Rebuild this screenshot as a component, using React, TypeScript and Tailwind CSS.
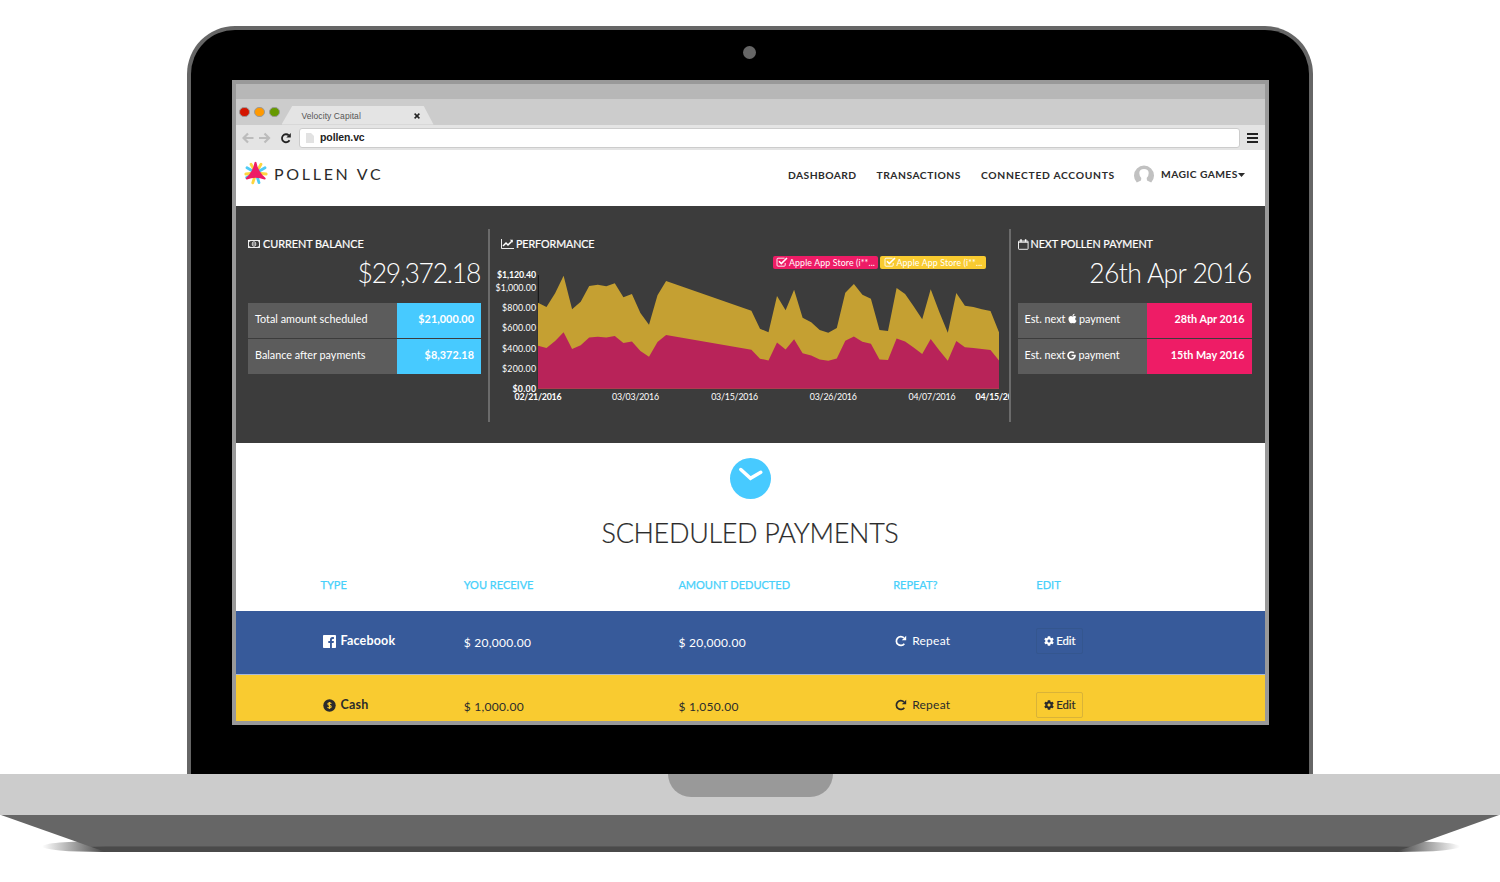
import { ReactNode } from "react";
import { FaApple, FaCog, FaGoogle } from "react-icons/fa";

// revenue per day, counted from 02/21/2016 as [day, svg height of the stacked total]
const totals: [number, number][] = [
  [0, 302.7], [1, 307], [2, 293.3], [3, 275.7], [4, 309.3], [5, 301.7], [6, 286], [7, 284.7],
  [8, 286.3], [9, 283.3], [10, 297.3], [11, 294], [12, 313], [13, 324.7], [14, 295.3], [15, 281],
  [25, 310.7], [26, 328.7], [27, 332.3], [28, 296], [29, 310.3], [30, 289.7], [31, 317.7],
  [32, 322.3], [33, 330], [34, 332.7], [35, 328], [36, 292.7], [37, 284], [38, 294.7],
  [39, 298.7], [40, 330], [41, 331], [42, 288], [43, 294], [44, 306.3], [45, 319.3],
  [46, 289.3], [47, 311.7], [48, 332.7], [49, 293], [50, 305.7], [51, 307], [52, 309.3],
  [53, 311], [54, 332.3],
];

const BASE = 388.7;
const LEFT = 538;
const RIGHT = 999;

const area = (share: number) => {
  const points = totals.map(([day, y]) => {
    const x = LEFT + (day * (RIGHT - LEFT)) / 54;
    return `${x.toFixed(1)},${(BASE - (BASE - y) * share).toFixed(1)}`;
  });
  return `${LEFT},${BASE} ${points.join(" ")} ${RIGHT},${BASE}`;
};

const yLabels: [string, number, number, boolean][] = [
  ["$1,120.40", 278.4, 39, true],
  ["$1,000.00", 290.6, 40.5, false],
  ["$800.00", 310.8, 34, false],
  ["$600.00", 331.2, 34, false],
  ["$400.00", 351.6, 34, false],
  ["$200.00", 371.6, 34, false],
  ["$0.00", 391.7, 23.5, true],
];

const xLabels: [string, number, boolean][] = [
  ["02/21/2016", 514.5, true],
  ["03/03/2016", 612, false],
  ["03/15/2016", 711.2, false],
  ["03/26/2016", 809.8, false],
  ["04/07/2016", 908.5, false],
  ["04/15/2016", 975.5, true],
];

const Chart = () => (
  <svg className="block" width="520" height="152" viewBox="490 270 520 152">
    <path d="M538.3 275v114" stroke="#111" strokeWidth="1" />
    <polygon points={area(1)} fill="#c5a032" />
    <polygon points={area(0.5)} fill="#b82359" />
    {yLabels.map(([label, y, width, bold]) => (
      <text
        key={label}
        x={536 - width}
        y={y}
        textLength={width}
        fontSize="8.8"
        fontWeight={bold ? 700 : 400}
        fill="#fff"
      >
        {label}
      </text>
    ))}
    {xLabels.map(([label, x, bold]) => (
      <text
        key={label}
        x={x}
        y="399.6"
        textLength="47"
        fontSize="8.8"
        fontWeight={bold ? 700 : 400}
        fill="#fff"
      >
        {label}
      </text>
    ))}
  </svg>
);

const Logo = () => (
  <svg width="24" height="24" viewBox="0 0 24 24">
    <g strokeWidth="2.8" strokeLinecap="round">
      <path d="M12 12 7 3.2M12 12l5-8.8M12 12 1.8 13M12 12l10.2 1M12 12 8.8 21.8" stroke="#fdd53f" />
      <path d="M12 12 3 6.8M12 12l9-5.2M12 12l3 9.6M12 12 2.6 16.4" stroke="#4fcbf5" />
    </g>
    <path
      d="M10.6 1.2q.9-.9 1.8 0Q14 10.5 21.5 17q.7 1.5-1 1.6Q11.500 14.800 3 18.600q-1.700-.1-1-1.600Q9 10.500 10.600 1.200Z"
      fill="#ee1c66"
    />
  </svg>
);

const MoneyIcon = () => (
  <svg width="12" height="8" viewBox="0 0 12 8" fill="none" stroke="#fff">
    <rect x=".5" y=".5" width="11" height="7" strokeWidth=".9" />
    <ellipse cx="6" cy="4" rx="1.8" ry="2.3" strokeWidth=".8" />
    <path d="M6 2.8v2.4M1 2.2 2.2 1M11 2.2 9.8 1M1 5.8 2.2 7M11 5.8 9.8 7" strokeWidth=".8" />
  </svg>
);

const TrendIcon = () => (
  <svg width="13" height="10" viewBox="0 0 13 10" fill="none" stroke="#fff">
    <path d="M.5 0v9.5H13" strokeWidth=".9" />
    <path d="m2 7 3-3 2 2 3.800-3.800" strokeWidth="1.5" />
    <path d="M8.800.8h3v3z" fill="#fff" stroke="none" />
  </svg>
);

const CalendarIcon = () => (
  <svg width="11" height="11" viewBox="0 0 11 11" fill="none" stroke="#fff">
    <rect x=".5" y="2" width="9.6" height="8.3" rx=".6" strokeWidth=".9" />
    <path d="M.5 3.2h9.6" strokeWidth="1" />
    <path d="M3 .2v2.600M7.600.2v2.600" strokeWidth="1.5" />
  </svg>
);

const CheckIcon = () => (
  <svg width="12" height="10" viewBox="0 0 12 10" fill="none" stroke="#fff">
    <path d="M8.600 1.200H2Q1 1.200 1 2.200v6q0 1 1 1h6.200q1 0 1-1V6" strokeWidth=".9" />
    <path d="m3 4.300 2.300 2.300L11 1" strokeWidth="1.6" />
  </svg>
);

const RepeatIcon = () => (
  <svg width="12" height="12" viewBox="0 0 12 12" fill="none">
    <path d="M9.300 8.700A4.400 4.400 0 1 1 8.900 2.900" stroke="currentColor" strokeWidth="1.7" />
    <path d="M11.200.8v4.400H6.800z" fill="currentColor" />
  </svg>
);

const FacebookIcon = () => (
  <svg width="13" height="13" viewBox="0 0 13 13">
    <rect width="13" height="13" rx=".8" fill="#fff" />
    <path d="M8.900 13V8h1.700l.3-2H8.900V4.800q0-.9 1-.9h1V2.100q-3.900-.7-3.900 2.400V6H5.300v2H7v5z" fill="#375a9a" />
  </svg>
);

const CashIcon = () => (
  <svg width="13" height="13" viewBox="0 0 13 13">
    <circle cx="6.5" cy="6.5" r="6.2" fill="#2b2b2b" />
    <path
      d="M8.300 4.800q-.5-.9-1.800-.9-1.600 0-1.600 1.200 0 1 1.600 1.300 1.700.3 1.700 1.400 0 1.200-1.700 1.200-1.500 0-1.900-1M6.500 3v7"
      fill="none"
      stroke="#f9cb30"
      strokeWidth="1.1"
    />
  </svg>
);

const BrowserBar = () => (
  <>
    <div className="h-[15px] shrink-0 bg-[#b7b7b7]" />
    <div className="flex h-[25.5px] shrink-0 items-end bg-[#ccc]">
      <div className="flex gap-[4.5px] pb-[7.5px] pl-[3.5px]">
        <i className="size-[10.5px] rounded-full border border-[#999] bg-[#d41500]" />
        <i className="size-[10.5px] rounded-full border border-[#999] bg-[#f90]" />
        <i className="size-[10.5px] rounded-full border border-[#999] bg-[#690]" />
      </div>
      <div className="ml-[2px] flex h-[19px] w-[152px] items-center bg-[#e4e4e4] pl-[20px] [clip-path:polygon(11px_0,142px_0,152px_100%,0_100%)]">
        <span className="w-[112px] pt-[2px] font-['Liberation_Sans'] text-[8.5px] tracking-[0.08px] text-[#555]">
          Velocity Capital
        </span>
        <svg width="6" height="6" viewBox="0 0 6 6" className="mt-[2px]">
          <path d="m.6.6 4.800 4.800M5.400.6.6 5.400" stroke="#222" strokeWidth="1.5" />
        </svg>
      </div>
    </div>
    <div className="flex h-[25.5px] shrink-0 items-center bg-[#e4e4e4] pl-[6px] pt-px">
      <svg width="29" height="12" viewBox="0 0 29 12" fill="none" stroke="#bcbcbc" strokeWidth="2.2" className="shrink-0">
        <path d="M6 1.500 1.500 6 6 10.500M1.500 6H11.500M22.500 1.500 27 6l-4.500 4.500M27 6H17" />
      </svg>
      <svg width="12" height="12" viewBox="0 0 12 12" fill="none" className="ml-[9px] mt-px shrink-0 text-[#222]">
        <path d="M9.500 8.200A4 4 0 1 1 8.800 3.400" stroke="currentColor" strokeWidth="1.8" />
        <path d="M10.800 1v4.500H6.300z" fill="currentColor" />
      </svg>
      <div className="ml-[7.5px] flex h-[20px] w-[941px] shrink-0 items-center rounded-[3px] border border-[#ccc] bg-white pl-[6px]">
        <svg width="8" height="10" viewBox="0 0 8 10">
          <path d="M0 0h5l3 3v7H0z" fill="#e2e2e2" />
        </svg>
        <span className="ml-[6px] font-['Liberation_Sans'] text-[10.5px] font-bold tracking-[-0.1px] text-[#222]">
          pollen.vc
        </span>
      </div>
      <svg width="11" height="10" viewBox="0 0 11 10" className="ml-[6.5px]">
        <path d="M0 1h11M0 5h11M0 9h11" stroke="#222" strokeWidth="1.9" />
      </svg>
    </div>
  </>
);

const Header = () => (
  <header className="flex h-[55.5px] shrink-0 items-start bg-white pl-[8.5px] text-[#2b2b2b]">
    <div className="flex pt-[11px]">
      <Logo />
      <span className="ml-[6px] w-[120px] text-[16px] leading-[25px] tracking-[2.7px]">
        POLLEN VC
      </span>
    </div>
    <nav className="ml-auto flex whitespace-nowrap pr-[20px] pt-[15.5px] text-[10.3px] font-bold leading-[19px]">
      <span className="w-[88.5px] pl-[0.5px] tracking-[0.42px]">DASHBOARD</span>
      <span className="w-[104.5px] pl-[0.5px] tracking-[0.51px]">TRANSACTIONS</span>
      <span className="w-[153px] pl-[0.5px] tracking-[0.69px]">CONNECTED ACCOUNTS</span>
      <svg width="20" height="20" viewBox="0 0 20 20" className="-mt-px">
        <path
          d="M2.800 17.500A10 10 0 1 1 17.200 17.500L13 15.500 12.700 13Q14.700 11 14.700 8 14.500 4 10 4T5.300 8Q5.300 11 7.300 13L7 15.500Z"
          fill="#c1c1c1"
        />
      </svg>
      <span className="-mt-px ml-[7px] w-[77px] pl-[0.5px] tracking-[0.4px]">MAGIC GAMES</span>
      <svg width="7" height="4" viewBox="0 0 7 4" className="mt-[7px]">
        <path d="M0 0h7L3.500 4z" fill="#2b2b2b" />
      </svg>
    </nav>
  </header>
);

type StatRow = { label: ReactNode; value: string };

const StatTable = ({ rows, pink }: { rows: StatRow[]; pink?: boolean }) => (
  <div className="flex flex-col gap-[1.5px]">
    {rows.map((row) => (
      <div key={row.value} className="flex h-[35px] bg-[#5c5c5c] text-[10.8px] leading-[32px]">
        <div className="flex h-[32px] flex-1 items-center whitespace-nowrap pl-[7px]">{row.label}</div>
        <div
          className={
            pink
              ? "w-[104.5px] bg-[#ee1c66] pr-[7px] text-right font-bold"
              : "w-[84.5px] bg-[#47caff] pr-[7px] text-right font-bold tracking-[0.05px]"
          }
        >
          {row.value}
        </div>
      </div>
    ))}
  </div>
);

const Stats = () => (
  <section className="flex h-[237.5px] shrink-0 bg-[#3c3c3c] pt-[23px] text-white">
    <div className="h-[193px] w-[254.5px] border-r-2 border-[#6b6b6b] pl-[12.5px] pr-[7px]">
      <h2 className="flex h-[30px] items-center gap-[3px] pt-px text-[10.9px] tracking-[-0.06px] [-webkit-text-stroke:0.2px]">
        <MoneyIcon />
        CURRENT BALANCE
      </h2>
      <p className="h-[44px] text-right text-[26.5px] font-light leading-[28px] tracking-[-1.25px]">
        <span className="mr-[1px]">$29,372.18</span>
      </p>
      <StatTable
        rows={[
          { label: "Total amount scheduled", value: "$21,000.00" },
          { label: "Balance after payments", value: "$8,372.18" },
        ]}
      />
    </div>
    <div className="h-[193px] w-[520.5px] overflow-hidden border-r-2 border-[#6b6b6b]">
      <h2 className="flex h-[27px] items-center gap-[2.5px] pl-[10.5px] pt-[4px] text-[10.7px] tracking-[-0.06px] [-webkit-text-stroke:0.2px]">
        <TrendIcon />
        PERFORMANCE
      </h2>
      <div className="flex h-[14px] justify-end gap-[2px] pr-[23px] text-[8.8px] leading-[13px] tracking-[0.12px]">
        <div className="flex h-[13.5px] w-[105.5px] items-center gap-[1px] whitespace-nowrap rounded-[2px] bg-[#ee1c66] pl-[3.5px]">
          <CheckIcon />
          Apple App Store (i**...
        </div>
        <div className="flex h-[13.5px] w-[105.5px] items-center gap-[1px] whitespace-nowrap rounded-[2px] bg-[#f9cb30] pl-[3.5px]">
          <CheckIcon />
          Apple App Store (i**...
        </div>
      </div>
      <Chart />
    </div>
    <div className="flex-1 pl-[7px] pr-[13px]">
      <h2 className="flex h-[30px] items-center gap-[2px] pt-px text-[10.8px] tracking-[-0.08px] [-webkit-text-stroke:0.2px]">
        <CalendarIcon />
        NEXT POLLEN PAYMENT
      </h2>
      <p className="h-[44px] text-right text-[26.5px] font-light leading-[28px] tracking-[-0.6px]">26th Apr 2016</p>
      <StatTable
        pink
        rows={[
          {
            label: (
              <>
                Est. next <FaApple className="ml-[1.5px] mr-[1px]" size={11} /> payment
              </>
            ),
            value: "28th Apr 2016",
          },
          {
            label: (
              <>
                Est. next <FaGoogle className="mx-[2px]" size={9} /> payment
              </>
            ),
            value: "15th May 2016",
          },
        ]}
      />
    </div>
  </section>
);

type PaymentProps = {
  icon: ReactNode;
  type: string;
  receive: string;
  deducted: string;
  className: string;
  buttonClass: string;
};

const PaymentRow = ({ icon, type, receive, deducted, className, buttonClass }: PaymentProps) => (
  <div className={`h-[64px] shrink-0 px-[85px] text-[12px] ${className}`}>
    <div className="grid h-[60px] grid-cols-[2fr_3fr_3fr_2fr_2fr] items-center">
      <div className="flex items-center gap-[5px] pl-[2px] text-[12.5px] font-bold tracking-[0.18px]">
        {icon}
        {type}
      </div>
      <div className="pt-[4px] tracking-[0.3px]">{receive}</div>
      <div className="pt-[4px] tracking-[0.3px]">{deducted}</div>
      <div className="flex items-center gap-[5px] pl-[2px] tracking-[0.25px]">
        <RepeatIcon />
        Repeat
      </div>
      <div>
        <button
          className={`flex h-[26px] w-[47px] items-center justify-center gap-[2px] rounded-[2px] border text-[11.3px] [-webkit-text-stroke:0.2px] ${buttonClass}`}
        >
          <FaCog size={10} />
          Edit
        </button>
      </div>
    </div>
  </div>
);

const Payments = () => (
  <section className="flex flex-1 flex-col bg-white">
    <div className="flex h-[168px] shrink-0 flex-col items-center pt-[15px]">
      <svg width="41" height="41" viewBox="0 0 41 41">
        <circle cx="20.5" cy="20.5" r="20.5" fill="#47caff" />
        <path
          d="m10.800 11.500 9.700 8.800 10.300-6"
          fill="none"
          stroke="#fff"
          strokeWidth="3.5"
          strokeLinecap="round"
        />
      </svg>
      <h1 className="mt-[16px] whitespace-nowrap text-[27px] font-light leading-[36px] tracking-[-0.33px] text-[#2b2b2b] [-webkit-text-stroke:0.2px]">
        SCHEDULED PAYMENTS
      </h1>
      <div className="mt-[25px] grid w-full grid-cols-[2fr_3fr_3fr_2fr_2fr] px-[85px] text-[11px] leading-[18px] text-[#47d0fa] [-webkit-text-stroke:0.25px]">
        <span>TYPE</span>
        <span>YOU RECEIVE</span>
        <span>AMOUNT DEDUCTED</span>
        <span>REPEAT?</span>
        <span>EDIT</span>
      </div>
    </div>
    <PaymentRow
      icon={<FacebookIcon />}
      type="Facebook"
      receive="$ 20,000.00"
      deducted="$ 20,000.00"
      className="border-b border-[#a9b9d8] bg-[#375a9a] text-white"
      buttonClass="border-[#34568f]"
    />
    <PaymentRow
      icon={<CashIcon />}
      type="Cash"
      receive="$ 1,000.00"
      deducted="$ 1,050.00"
      className="bg-[#f9cb30] text-[#2b2b2b]"
      buttonClass="border-[#d9b338]"
    />
  </section>
);

export default function App() {
  return (
    <div className="flex h-[882px] w-[1500px] flex-col items-center overflow-hidden bg-white pt-[26px] font-['Lato',sans-serif]">
      <div className="flex h-[747.5px] w-[1126px] shrink-0 flex-col items-center rounded-t-[48px] border-x-4 border-t-4 border-[#666] bg-black">
        <div className="mr-[2px] mt-[16px] size-[13px] shrink-0 rounded-full bg-[#666]" />
        <div className="mt-[21px] flex h-[645px] w-[1037px] shrink-0 flex-col overflow-hidden border-4 border-[#999] bg-white">
          <BrowserBar />
          <Header />
          <Stats />
          <Payments />
        </div>
      </div>
      <div className="flex h-[41px] w-full shrink-0 justify-center bg-[#ccc] pl-[1px]">
        <div className="h-[23.5px] w-[165.5px] rounded-b-[23px] bg-[#999]" />
      </div>
      <svg width="1500" height="40" viewBox="0 0 1500 40" className="block shrink-0">
        <defs>
          <linearGradient id="shade">
            <stop offset="0" stopColor="#444" stopOpacity="0" />
            <stop offset=".045" stopColor="#444" />
            <stop offset=".955" stopColor="#444" />
            <stop offset="1" stopColor="#444" stopOpacity="0" />
          </linearGradient>
        </defs>
        <rect x="42" y="26" width="1418" height="11" rx="60" ry="5.5" fill="url(#shade)" />
        <path d="M90 31.500h1321l-17 5.500H106z" fill="#4a4a4a" />
        <path d="M1 0h1498l-88 31.500H90z" fill="#666" />
      </svg>
    </div>
  );
}
